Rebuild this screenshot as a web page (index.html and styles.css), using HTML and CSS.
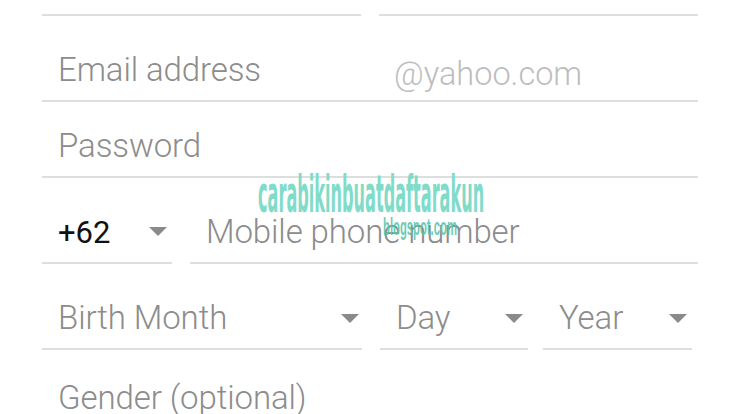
FILE: index.html
```html
<!DOCTYPE html>
<html lang="en">
<head>
    <meta charset="UTF-8">
    <meta name="viewport" content="width=device-width, initial-scale=1.0">
    <title>Sign up</title>
    <link rel="stylesheet" href="styles.css">
</head>
<body>
    <div class="signup-form">
        <div class="row row-name">
            <div class="field"></div>
            <div class="field"></div>
        </div>

        <div class="row row-email">
            <div class="field">
                <span class="placeholder">Email address</span>
                <span class="domain">@yahoo.com</span>
            </div>
        </div>

        <div class="row row-password">
            <div class="field">
                <span class="placeholder">Password</span>
            </div>
        </div>

        <div class="row row-phone">
            <div class="field select code">
                <span class="value">+62</span>
                <span class="caret"></span>
            </div>
            <div class="field phone">
                <span class="placeholder">Mobile phone number</span>
            </div>
        </div>

        <div class="row row-birth">
            <div class="field select month">
                <span class="placeholder">Birth Month</span>
                <span class="caret"></span>
            </div>
            <div class="field select day">
                <span class="placeholder">Day</span>
                <span class="caret"></span>
            </div>
            <div class="field select year">
                <span class="placeholder">Year</span>
                <span class="caret"></span>
            </div>
        </div>

        <div class="row row-gender">
            <div class="field no-line">
                <span class="placeholder">Gender (optional)</span>
            </div>
        </div>

        <!-- watermark on top of the screenshot -->
        <div class="watermark">
            <span class="wm-title">carabikinbuatdaftarakun</span>
            <span class="wm-sub">blogspot.com</span>
        </div>
    </div>
</body>
</html>
```

FILE: styles.css
```css
/* Reset */
* {
    margin: 0;
    padding: 0;
    box-sizing: border-box;
}

body {
    background: #ffffff;
    font-family: Roboto, 'Liberation Sans', sans-serif;
    overflow: hidden;
}

.signup-form {
    position: relative;
    padding: 0 42px;
}

/* Rows */
.row {
    display: flex;
    gap: 18px;
}

.row-name { height: 16px; }
.row-email { height: 86px; }
.row-password { height: 76px; }
.row-phone { height: 86px; }
.row-birth { height: 86px; padding-right: 6px; }
.row-gender { height: 64px; }

/* Field with underline */
.field {
    flex: 1;
    display: flex;
    align-items: flex-end;
    border-bottom: 2px solid #dedede;
    padding: 0 5px 14px 16px;
    position: relative;
}

.field.no-line {
    border-bottom: none;
    padding-bottom: 0;
}

.placeholder {
    font-size: 33px;
    font-weight: 300;
    line-height: 1;
    letter-spacing: -0.1px;
    color: #8c8c8c;
}

.domain {
    margin-left: 133px;
    margin-bottom: -4px;
    font-size: 32.5px;
    font-weight: 300;
    line-height: 1;
    color: #bdbdbd;
}

.value {
    font-size: 31px;
    font-weight: 400;
    line-height: 1;
    color: #111111;
}

/* Select boxes */
.select {
    justify-content: space-between;
}

.code { flex: 0 0 130px; }
.month { flex: 0 0 320px; padding-right: 3px; }
.day { flex: 0 0 148px; }
.year { flex: 0 0 149px; margin-left: -3px; }

.caret {
    width: 0;
    height: 0;
    border-left: 9px solid transparent;
    border-right: 9px solid transparent;
    border-top: 9px solid #8a8a8a;
    align-self: flex-start;
    margin-top: 49px;
}

.row-birth .caret { margin-top: 50px; }

/* Watermark */
.watermark {
    position: absolute;
    left: 258px;
    top: 168px;
    width: 230px;
    color: #80dbc9;
}

.wm-title {
    display: block;
    font-family: 'DejaVu Sans', sans-serif;
    font-weight: bold;
    font-size: 52px;
    line-height: 52px;
    transform: scaleX(0.31);
    transform-origin: left top;
    white-space: nowrap;
}

.wm-sub {
    display: block;
    margin: -5px 0 0 125px;
    font-family: 'Liberation Sans', sans-serif;
    font-weight: bold;
    font-size: 24px;
    line-height: 24px;
    color: #52c4aa;
    opacity: 0.85;
    transform: scaleX(0.47);
    transform-origin: left top;
    white-space: nowrap;
}
```
